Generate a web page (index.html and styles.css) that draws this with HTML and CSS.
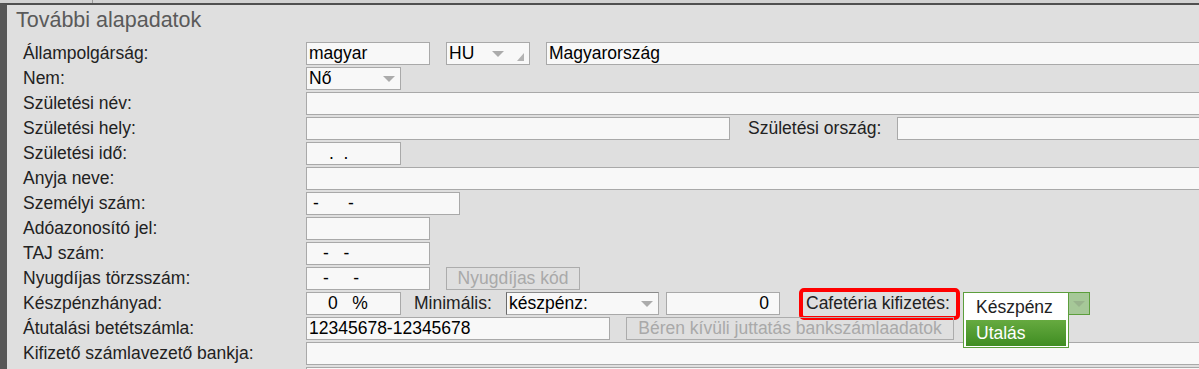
FILE: index.html
```html
<!doctype html>
<html lang="hu">
<head>
  <meta charset="UTF-8">
  <title>További alapadatok</title>
  <link rel="stylesheet" href="styles.css">
</head>
<body>
  <div class="topstrip"><div class="tab"></div></div>
  <div class="panel">
    <h2 class="title">További alapadatok</h2>

    <div class="row">
      <div class="lbl">Állampolgárság:</div>
      <div class="inp w124">magyar</div>
      <div class="inp sel hu w84 ml16">HU<span class="corner"></span></div>
      <div class="inp full ml16">Magyarország</div>
    </div>
    <div class="row">
      <div class="lbl">Nem:</div>
      <div class="inp sel w95">Nő</div>
    </div>
    <div class="row">
      <div class="lbl">Születési név:</div>
      <div class="inp full"></div>
    </div>
    <div class="row">
      <div class="lbl">Születési hely:</div>
      <div class="inp w424"></div>
      <div class="lbl2 orszag">Születési ország:</div>
      <div class="inp full"></div>
    </div>
    <div class="row">
      <div class="lbl">Születési idő:</div>
      <div class="inp w95 datum">.  .</div>
    </div>
    <div class="row">
      <div class="lbl">Anyja neve:</div>
      <div class="inp full"></div>
    </div>
    <div class="row">
      <div class="lbl">Személyi szám:</div>
      <div class="inp w154 szig">-      -</div>
    </div>
    <div class="row">
      <div class="lbl">Adóazonosító jel:</div>
      <div class="inp w124"></div>
    </div>
    <div class="row">
      <div class="lbl">TAJ szám:</div>
      <div class="inp w124 taj">-   -</div>
    </div>
    <div class="row">
      <div class="lbl">Nyugdíjas törzsszám:</div>
      <div class="inp w124 taj">-     -</div>
      <button class="btn w134 ml16" disabled>Nyugdíjas kód</button>
    </div>
    <div class="row">
      <div class="lbl">Készpénzhányad:</div>
      <div class="inp w95 szazalek">0   %</div>
      <div class="lbl2 minimalis">Minimális:</div>
      <div class="inp sel w153 focus">készpénz:</div>
      <div class="inp w114 num">0</div>
      <div class="lbl2 cafe">Cafetéria kifizetés:</div>
      <div class="gsel">
        <span class="garrow"></span>
        <ul class="glist">
          <li>Készpénz</li>
          <li class="on">Utalás</li>
        </ul>
      </div>
    </div>
    <div class="row">
      <div class="lbl">Átutalási betétszámla:</div>
      <div class="inp w304">12345678-12345678</div>
      <button class="btn w328 ml16" disabled>Béren kívüli juttatás bankszámlaadatok</button>
    </div>
    <div class="row">
      <div class="lbl">Kifizető számlavezető bankja:</div>
      <div class="inp full"></div>
    </div>
    <div class="row">
      <div class="lbl"></div>
      <div class="inp full"></div>
    </div>
  </div>
</body>
</html>
```

FILE: styles.css
```css
* {
  box-sizing: border-box;
}
body {
  margin: 0;
  width: 1199px;
  height: 369px;
  overflow: hidden;
  background: #dfdfdf;
  font-family: "Liberation Sans", Arial, sans-serif;
  font-size: 17.5px;
  color: #222;
}

/* felső sáv */
.topstrip {
  height: 3px;
  background: #d2d2d2;
}
.topstrip .tab {
  width: 93px;
  height: 3px;
  border-right: 1px solid #9a9a9a;
}
.panel {
  border-top: 2px solid #505050;
  border-left: 7px solid #575757;
  height: 366px;
  overflow: hidden;
}
.title {
  margin: 0;
  height: 37px;
  padding: 3px 0 0 9px;
  font-size: 21.5px;
  font-weight: normal;
  line-height: 25px;
  color: #5a5a5a;
}

/* sorok */
.row {
  display: flex;
  align-items: flex-start;
  height: 25px;
  white-space: nowrap;
}
.row > * {
  flex: 0 0 auto;
}
.lbl {
  width: 299px;
  padding-left: 16px;
  line-height: 23px;
}
.lbl2 {
  line-height: 23px;
}
.orszag {
  margin-left: 18px;
  width: 149px;
}
.minimalis {
  margin-left: 13px;
  width: 92px;
}

/* mezők */
.inp {
  height: 23px;
  border: 1px solid #a9a9a9;
  background: #f8f8f8;
  padding: 0 2px;
  line-height: 21px;
  color: #000;
  white-space: pre;
}
.full { width: 1000px; }
.w84 { width: 84px; }
.w95 { width: 95px; }
.w114 { width: 114px; }
.w124 { width: 124px; }
.w134 { width: 134px; }
.w153 { width: 153px; }
.w154 { width: 154px; }
.w304 { width: 304px; }
.w328 { width: 328px; }
.w424 { width: 424px; }
.ml16 { margin-left: 16px; }

.datum { padding-left: 22px; }
.szig { padding-left: 6px; }
.taj { padding-left: 16px; }
.szazalek { padding-left: 21px; }
.num {
  margin-left: 7px;
  text-align: right;
  padding-right: 10px;
}
.focus {
  border-left-color: #6a6a6a;
  border-top-color: #8a8a8a;
}

/* legördülő nyíl */
.sel {
  position: relative;
}
.sel::after {
  content: "";
  position: absolute;
  right: 5px;
  top: 8px;
  border-left: 6px solid transparent;
  border-right: 6px solid transparent;
  border-top: 6px solid #ababab;
}
.hu::after {
  right: 25px;
}
.corner {
  position: absolute;
  right: 5px;
  top: 10px;
  width: 0;
  height: 0;
  border-left: 7px solid transparent;
  border-bottom: 8px solid #b3b3b3;
}

/* gombok */
.btn {
  height: 23px;
  border: 1px solid #acacac;
  background: transparent;
  padding: 0;
  font-family: inherit;
  font-size: 17.5px;
  line-height: 21px;
  color: #a9a9a9;
}

/* cafetéria */
.cafe {
  margin-left: 23px;
  width: 153px;
  height: 24px;
  padding-left: 3px;
  line-height: 22px;
  outline: 4px solid #f00;
  border-radius: 1px;
}
.gsel {
  position: relative;
  margin-left: 7px;
  width: 127px;
  height: 23px;
  border: 1px solid #5c9e3c;
  background: #fff;
}
.garrow {
  position: absolute;
  right: 0;
  top: 0;
  width: 21px;
  height: 21px;
  background: #a6c898;
}
.garrow::after {
  content: "";
  position: absolute;
  left: 5px;
  top: 8px;
  border-left: 6px solid transparent;
  border-right: 6px solid transparent;
  border-top: 6px solid #98b38c;
}
.glist {
  position: absolute;
  left: -1px;
  top: -1px;
  width: 106px;
  margin: 0;
  padding: 1px 2px;
  list-style: none;
  border: 1px solid #5c9e3c;
  background: #fff;
}
.glist li {
  height: 26px;
  padding-left: 10px;
  line-height: 26px;
  color: #222;
}
.glist li.on {
  background: linear-gradient(#66aa40, #3f8d22);
  color: #fff;
}
```
